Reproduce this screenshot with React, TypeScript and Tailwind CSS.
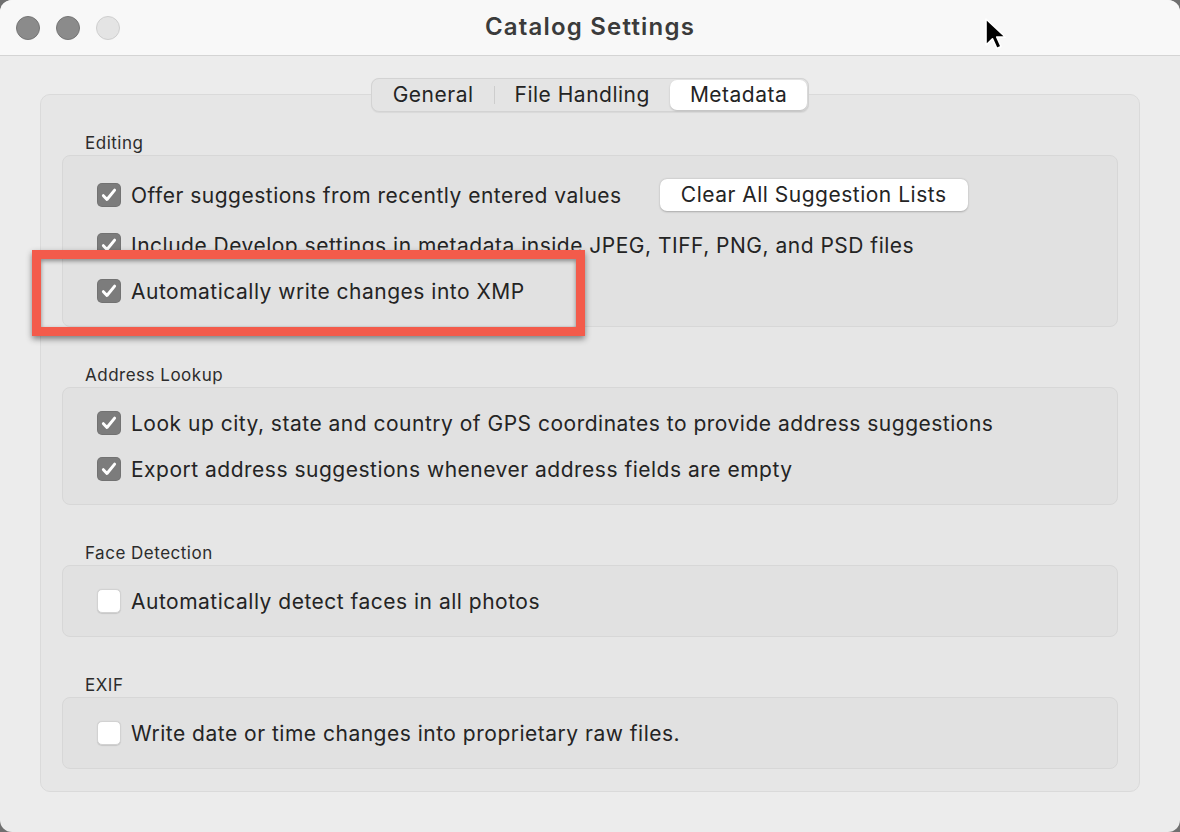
import React from "react";

const font = { fontFamily: "Inter, 'Noto Sans', sans-serif" };

function Checkbox({ checked }: { checked: boolean }) {
  if (checked) {
    return (
      <span className="flex h-[24px] w-[24px] shrink-0 items-center justify-center rounded-[5px] bg-[#7c7c7c] shadow-[inset_0_0_0_1px_rgba(0,0,0,0.08)]">
        <svg width="18" height="18" viewBox="0 0 16 16" fill="none">
          <path d="M3 8.6l3.2 3.4L13 3.6" stroke="white" strokeWidth="2.6" strokeLinecap="round" strokeLinejoin="round" />
        </svg>
      </span>
    );
  }
  return (
    <span className="h-[24px] w-[24px] shrink-0 rounded-[5px] border border-[#d2d2d2] bg-white shadow-[0_0.5px_1px_rgba(0,0,0,0.12)]" />
  );
}

function Label({ children }: { children: React.ReactNode }) {
  return (
    <span className="ml-[10px] whitespace-nowrap text-[21px] leading-none tracking-[0.5px] text-[#242424]">{children}</span>
  );
}

function Row({ checked, label }: { checked: boolean; label: string }) {
  return (
    <div className="flex h-7 items-center">
      <Checkbox checked={checked} />
      <Label>{label}</Label>
    </div>
  );
}

function Section({ title, children }: { title: string; children: React.ReactNode }) {
  return (
    <div>
      <div className="h-[20px] pl-[23px] text-[17px] leading-[20px] tracking-[0.5px] text-[#2c2c2c]">{title}</div>
      <div className="mt-[2px] flex flex-col gap-[18px] rounded-[8px] border border-[#d7d7d7] bg-[#e1e1e1] py-[21px] pl-[34px]">
        {children}
      </div>
    </div>
  );
}

export default function App() {
  return (
    <div className="h-[832px] w-[1180px] overflow-hidden bg-[#707070]" style={font}>
      <div className="relative flex h-[832px] w-[1180px] flex-col overflow-hidden rounded-[12px] bg-[#ececec]">
        {/* title bar */}
        <div className="relative flex h-[56px] shrink-0 items-center border-b border-[#d4d4d4] bg-[#f8f8f8]">
          <div className="flex gap-[16px] pl-[16px]">
            <span className="h-[24px] w-[24px] rounded-full border border-[#767676] bg-[#8b8b8b]" />
            <span className="h-[24px] w-[24px] rounded-full border border-[#767676] bg-[#8b8b8b]" />
            <span className="h-[24px] w-[24px] rounded-full border border-[#cfcfcf] bg-[#e4e4e4]" />
          </div>
          <div className="absolute inset-x-0 top-0 flex h-[54px] items-center justify-center text-[24px] font-semibold tracking-[1.2px] text-[#3b3b3b]">
            Catalog Settings
          </div>
          <svg className="absolute left-[984px] top-[17px]" width="22" height="34" viewBox="0 0 22 34">
            <path d="M2 2v26l6.5-6.2 4.3 9.6 4.2-1.9-4.2-9.4h8.8z" fill="black" stroke="white" strokeWidth="1.6" strokeLinejoin="round" />
          </svg>
        </div>

        {/* body */}
        <div className="flex flex-1 flex-col items-center pt-[22px]">
          <div className="relative z-10 -mb-[18px] flex h-[34px] items-center rounded-[8px] border border-[#d3d3d3] bg-[#e4e4e4] p-[1px] text-[21px] tracking-[0.5px] text-[#242424] shadow-[0_0.5px_1px_rgba(0,0,0,0.06)]">
            <div className="flex h-full items-center px-[20px]">General</div>
            <span className="h-[18px] w-px bg-[#cdcdcd]" />
            <div className="flex h-full items-center px-[20px]">File Handling</div>
            <div className="flex h-full items-center rounded-[7px] bg-white px-[20px] shadow-[0_1px_2px_rgba(0,0,0,0.18)]">Metadata</div>
          </div>

          <div className="flex w-[1100px] flex-col gap-[38px] rounded-[10px] border border-[#dadada] bg-[#e6e6e6] px-[21px] pb-[22px] pt-[38px]">
            <Section title="Editing">
              <div className="flex h-9 items-center">
                <Checkbox checked />
                <Label>Offer suggestions from recently entered values</Label>
                <button className="ml-[38px] h-[32px] w-[308px] rounded-[7px] bg-white text-[21px] tracking-[0.5px] text-[#242424] shadow-[0_0.5px_2px_rgba(0,0,0,0.25)]">
                  Clear All Suggestion Lists
                </button>
              </div>
              <Row checked label="Include Develop settings in metadata inside JPEG, TIFF, PNG, and PSD files" />
              <Row checked label="Automatically write changes into XMP" />
            </Section>
            <Section title="Address Lookup">
              <Row checked label="Look up city, state and country of GPS coordinates to provide address suggestions" />
              <Row checked label="Export address suggestions whenever address fields are empty" />
            </Section>
            <Section title="Face Detection">
              <Row checked={false} label="Automatically detect faces in all photos" />
            </Section>
            <Section title="EXIF">
              <Row checked={false} label="Write date or time changes into proprietary raw files." />
            </Section>
          </div>
        </div>

        {/* highlight annotation */}
        <div className="pointer-events-none absolute left-[32px] top-[250px] h-[86px] w-[553px] border-[9px] border-[#f35b4b] shadow-[0_3px_6px_rgba(0,0,0,0.45),inset_0_2px_4px_rgba(0,0,0,0.4)]" />
      </div>
    </div>
  );
}
